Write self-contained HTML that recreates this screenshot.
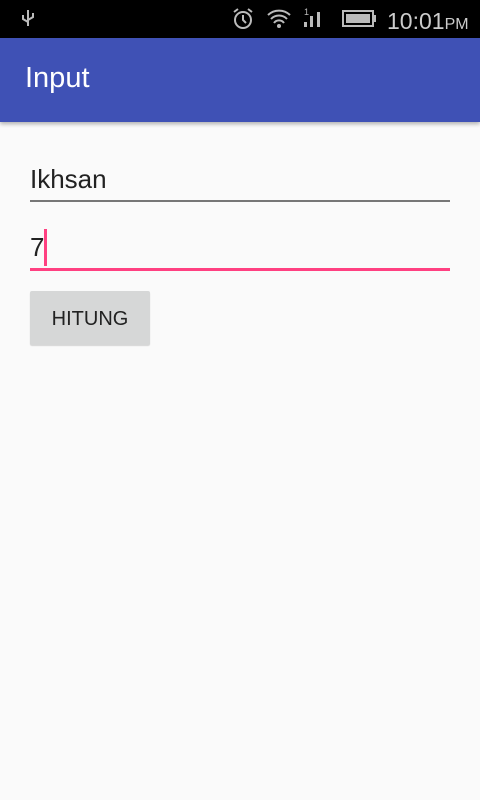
<!DOCTYPE html>
<html><head><style>
body{margin:0;width:480px;height:800px;background:#fafafa;font-family:"Liberation Sans",sans-serif;position:relative;overflow:hidden}
.abs{position:absolute}
</style></head><body>
<div class="abs" style="left:0;top:0;width:480px;height:38px;background:#000"></div>
<svg class="abs" style="left:0;top:0" width="480" height="38">
<g stroke="#bbb" fill="none" stroke-width="2">
<path d="M28 10v16M23 15v4l5 3M33 13v4l-5 3"/>
<circle cx="243" cy="20" r="8"/><path d="M243 15v5l3 3M234 12l4-3M252 12l-4-3"/>
<path d="M268 15a16 16 0 0 1 22 0M271 19a11 11 0 0 1 16 0M274 23a6 6 0 0 1 10 0"/>
</g>
<circle cx="279" cy="26" r="2" fill="#bbb"/>
<rect x="304" y="22" width="3" height="5" fill="#bbb"/><rect x="310" y="16" width="3" height="11" fill="#bbb"/><rect x="317" y="12" width="3" height="15" fill="#bbb"/>
<text x="304" y="15" fill="#bbb" font-size="9" font-family="Liberation Sans">1</text>
<rect x="343" y="11" width="30" height="15" fill="none" stroke="#bbb" stroke-width="2"/><rect x="346" y="14" width="24" height="9" fill="#bbb"/><rect x="373" y="15" width="3" height="7" fill="#bbb"/>
<text x="387" y="29" fill="#ccc" font-size="23" font-family="Liberation Sans">10:01<tspan font-size="16">PM</tspan></text>
</svg>
<div class="abs" style="left:0;top:38px;width:480px;height:84px;background:#3F51B5;box-shadow:0 2px 4px rgba(0,0,0,.3)"></div>
<div class="abs" style="left:25px;top:62px;color:#fff;font-size:29px">Input</div>
<div class="abs" style="left:30px;top:164px;color:#222;font-size:26px">Ikhsan</div>
<div class="abs" style="left:30px;top:200px;width:420px;height:2px;background:#777"></div>
<div class="abs" style="left:30px;top:232px;color:#222;font-size:26px">7</div>
<div class="abs" style="left:44px;top:229px;width:3px;height:37px;background:#FF4081"></div>
<div class="abs" style="left:30px;top:268px;width:420px;height:3px;background:#FF4081"></div>
<div class="abs" style="left:30px;top:291px;width:120px;height:54px;background:#D6D7D7;border-radius:2px;box-shadow:0 1px 1px rgba(0,0,0,.15);color:#222;font-size:20px;line-height:56px;text-align:center">HITUNG</div>
</body></html>
